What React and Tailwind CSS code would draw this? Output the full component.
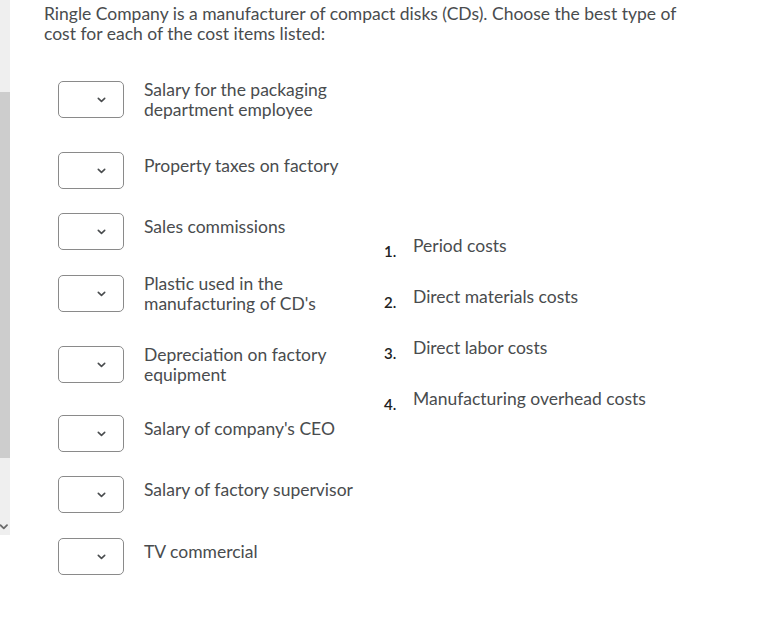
import React from "react";

const rows = [
  { text: "Salary for the packaging department employee", two: true, h: "h-[71px]" },
  { text: "Property taxes on factory", two: false, h: "h-[61px]" },
  { text: "Sales commissions", two: false, h: "h-[62px]" },
  { text: "Plastic used in the manufacturing of CD's", two: true, h: "h-[71px]" },
  { text: "Depreciation on factory equipment", two: true, h: "h-[69px]" },
  { text: "Salary of company's CEO", two: false, h: "h-[61px]" },
  { text: "Salary of factory supervisor", two: false, h: "h-[62px]" },
  { text: "TV commercial", two: false, h: "h-[37px]" },
];

const answers = [
  "Period costs",
  "Direct materials costs",
  "Direct labor costs",
  "Manufacturing overhead costs",
];

function Chevron() {
  return (
    <svg width="9" height="6" viewBox="0 0 9 6" fill="none">
      <path d="M1.3 1.3 L4.5 4.3 L7.7 1.3" stroke="#494c4e" strokeWidth="1.6" strokeLinecap="round" strokeLinejoin="round" />
    </svg>
  );
}

function SelectBox() {
  return (
    <div className="w-[66px] h-[37px] shrink-0 border border-[#8a8a8a] rounded-[5px] bg-white flex items-center justify-end pr-[17px]">
      <Chevron />
    </div>
  );
}

export default function App() {
  return (
    <div
      className="w-[761px] h-[622px] bg-white flex overflow-hidden text-[#494c4e]"
      style={{ fontFamily: "Lato, 'Open Sans', sans-serif" }}
    >
      <div className="w-[10px] h-[535px] bg-[#efefef] flex flex-col shrink-0">
        <div className="h-[92px]" />
        <div className="h-[366px] bg-[#cdcdcd]" />
        <div className="flex-1 flex items-end pb-[5px]">
          <svg width="8" height="6" viewBox="0 0 8 6" fill="none">
            <path d="M0.5 1.2 L3.8 4.4 L7 1.2" stroke="#6a6a6a" strokeWidth="1.8" strokeLinecap="round" strokeLinejoin="round" />
          </svg>
        </div>
      </div>
      <div className="pl-[34px] pt-[4px] flex flex-col">
        <p className="w-[650px] text-[17.5px] leading-[20px]">
          Ringle Company is a manufacturer of compact disks (CDs). Choose the best type of cost for each of the cost items listed:
        </p>
        <div className="mt-[37px] flex">
          <div className="pl-[14px] flex flex-col">
            {rows.map((r, i) => (
              <div key={i} className={`flex items-start ${r.h}`}>
                <SelectBox />
                <div
                  className={`ml-[20px] w-[225px] text-[17.5px] leading-[20px] ${r.two ? "-mt-[1px]" : "mt-[4px]"}`}
                >
                  {r.text}
                </div>
              </div>
            ))}
          </div>
          <div className="ml-[15px] mt-[155px] flex flex-col gap-[26px]">
            {answers.map((a, i) => (
              <div key={i} className="flex items-start">
                <span className="w-[29px] pt-[5px] text-[15px] leading-[20px] font-semibold text-[#202122]">
                  {i + 1}.
                </span>
                <span className="text-[17.5px] leading-[20px]">{a}</span>
              </div>
            ))}
          </div>
        </div>
      </div>
    </div>
  );
}
